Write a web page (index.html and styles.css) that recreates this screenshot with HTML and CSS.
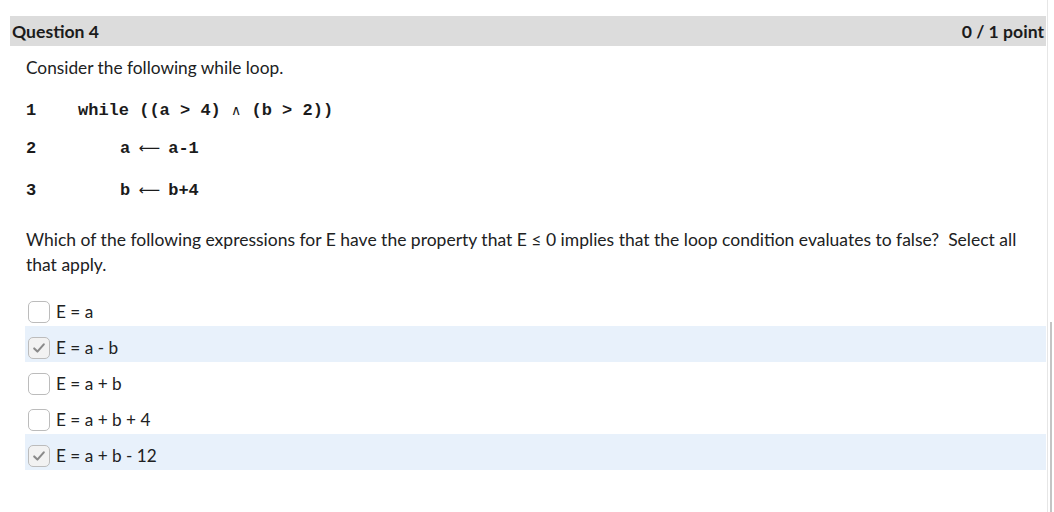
FILE: index.html
```html
<!DOCTYPE html>
<html>
<head>
<meta charset="utf-8">
<link rel="stylesheet" href="styles.css">
</head>
<body>
<div class="page">
  <div class="panel">
    <div class="qhead">
      <span class="qtitle">Question 4</span>
      <span class="qscore">0 / 1 point</span>
    </div>
    <div class="qbody">
      <p class="intro">Consider the following while loop.</p>
      <div class="code">
        <div class="cline l1"><span class="num">1</span><span class="src">while ((a &gt; 4) <span class="wedge">∧</span> (b &gt; 2))</span></div>
        <div class="cline l2"><span class="num">2</span><span class="src ind">a<span class="arrow">⟵</span>a-1</span></div>
        <div class="cline l3"><span class="num">3</span><span class="src ind">b<span class="arrow">⟵</span>b+4</span></div>
      </div>
      <p class="prompt">Which of the following expressions for E have the property that E ≤ 0 implies that the loop condition evaluates to false?&nbsp; Select all that apply.</p>
      <div class="options">
        <div class="opt"><span class="box"></span><span class="otext">E = a</span></div>
        <div class="opt sel"><span class="box checked"><svg viewBox="0 0 20 20" width="16" height="16"><path d="M4 10.5 L8 14.5 L16 5.5" fill="none" stroke="#8a8a8a" stroke-width="2.6" stroke-linecap="round" stroke-linejoin="round"/></svg></span><span class="otext">E = a - b</span></div>
        <div class="opt"><span class="box"></span><span class="otext">E = a + b</span></div>
        <div class="opt"><span class="box"></span><span class="otext">E = a + b + 4</span></div>
        <div class="opt sel"><span class="box checked"><svg viewBox="0 0 20 20" width="16" height="16"><path d="M4 10.5 L8 14.5 L16 5.5" fill="none" stroke="#8a8a8a" stroke-width="2.6" stroke-linecap="round" stroke-linejoin="round"/></svg></span><span class="otext">E = a + b - 12</span></div>
      </div>
    </div>
  </div>
  <div class="scroll"><div class="thumb"></div></div>
</div>
</body>
</html>
```

FILE: styles.css
```css
html, body {
  margin: 0;
  padding: 0;
  background: #ffffff;
}
body {
  font-family: Lato, "Noto Sans", sans-serif;
  color: #202122;
  width: 1054px;
  height: 512px;
  overflow: hidden;
}
.page {
  display: flex;
  height: 512px;
}
.panel {
  width: 1038px;
  margin-left: 10px;
  padding-top: 16px;
}
.scroll {
  width: 6px;
  margin-left: 1px;
  border-left: 1px solid #e6e6e6;
  display: flex;
  flex-direction: column;
  justify-content: flex-end;
}
.thumb {
  height: 190px;
  width: 2px;
  margin-left: 2px;
  background: #c4c4c4;
}
.qhead {
  height: 30px;
  background: #dcdcdc;
  display: flex;
  justify-content: space-between;
  align-items: center;
  padding: 0 2px 0 2px;
  font-weight: 700;
  font-size: 17.6px;
  color: #1b1b1b;
}
.qbody {
  padding-left: 16px;
}
.intro {
  margin: 0;
  padding-top: 12px;
  font-size: 17.3px;
  line-height: 20px;
}
.code {
  font-family: "Liberation Mono", "Courier New", monospace;
  font-weight: 700;
  font-size: 17px;
  color: #1b1b1b;
  padding-top: 22px;
}
.cline {
  display: flex;
  height: 20px;
  align-items: center;
  white-space: pre;
}
.l2 { margin-top: 18px; }
.l3 { margin-top: 22px; }
.num {
  width: 52px;
}
.ind {
  padding-left: 42px;
}
.wedge {
  font-family: "DejaVu Sans", sans-serif;
  font-weight: 400;
  font-size: 14px;
}
.arrow {
  display: inline-block;
  width: 38px;
  text-align: center;
  font-family: "DejaVu Sans", sans-serif;
  font-weight: 400;
  font-size: 15px;
}
.prompt {
  margin: 0;
  padding-top: 27px;
  font-size: 17.5px;
  line-height: 25px;
  padding-right: 14px;
}
.options {
  margin-top: 13px;
  margin-left: -1px;
}
.opt {
  height: 36px;
  display: flex;
  align-items: flex-start;
  padding-top: 11px;
  box-sizing: border-box;
  padding-left: 3px;
  font-size: 17.2px;
}
.opt.sel {
  background: #e8f1fb;
}
.box {
  width: 20px;
  height: 20px;
  border: 1px solid #bcbcbc;
  border-radius: 5px;
  background: #ffffff;
  box-sizing: content-box;
  display: flex;
  align-items: center;
  justify-content: center;
  margin-right: 6px;
}
.box.checked {
  background: #f2f2f2;
}
.otext {
  line-height: 22px;
}
```
